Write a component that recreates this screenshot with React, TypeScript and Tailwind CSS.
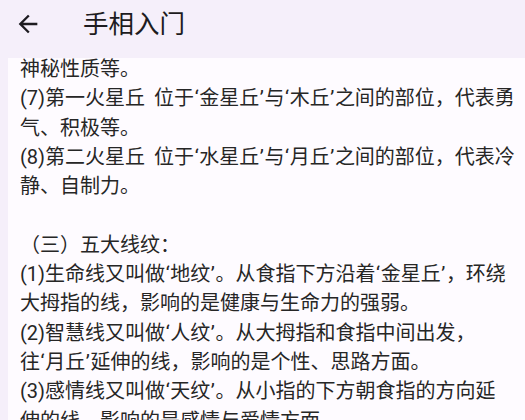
const LINES = [
  '神秘性质等。',
  '(7)第一火星丘 位于‘金星丘’与‘木丘’之间的部位，代表勇',
  '气、积极等。',
  '(8)第二火星丘 位于‘水星丘’与‘月丘’之间的部位，代表冷',
  '静、自制力。',
  '',
  '（三）五大线纹：',
  '(1)生命线又叫做‘地纹’。从食指下方沿着‘金星丘’，环绕',
  '大拇指的线，影响的是健康与生命力的强弱。',
  '(2)智慧线又叫做‘人纹’。从大拇指和食指中间出发，',
  '往‘月丘’延伸的线，影响的是个性、思路方面。',
  '(3)感情线又叫做‘天纹’。从小指的下方朝食指的方向延',
  '伸的线，影响的是感情与爱情方面。',
]

// quotes and spaces are a touch wider in the screenshot than in Roboto
function Line({ text }: { text: string }) {
  const parts = text.split(/([‘’ ])/)
  return (
    <div className="whitespace-nowrap h-[29.3px]">
      {parts.map((p, i) =>
        p === '‘' || p === '’' ? (
          <span key={i} className="px-[0.6px]">{p}</span>
        ) : p === ' ' ? (
          <span key={i} className="inline-block w-[9px]" />
        ) : (
          <span key={i}>{p}</span>
        ),
      )}
    </div>
  )
}

export default function App() {
  return (
    <div
      className="w-[525px] h-[420px] flex flex-col bg-[#f5effa] overflow-hidden"
      style={{ fontFamily: "Roboto, 'Noto Sans CJK SC', sans-serif" }}
    >
      {/* App bar */}
      <div className="h-[58px] shrink-0 flex items-center -mt-[5px]">
        <div className="w-[56px] flex items-center justify-center">
          <svg width="28" height="28" viewBox="0 0 24 24" className="text-[#1d1b20]">
            <path d="M20 11H7.83l5.59-5.59L12 4l-8 8 8 8 1.41-1.41L7.83 13H20v-2z" fill="currentColor" />
          </svg>
        </div>
        <div className="ml-[27px] text-[25.5px] text-[#1d1b20]">手相入门</div>
      </div>

      {/* Body */}
      <div className="flex-1 ml-[8px] mt-[5px] bg-[#fefbff] overflow-hidden">
        <div className="pl-[12px] -mt-[3px] text-[20px] leading-[29.3px] text-[#262626]">
          {LINES.map((l, i) => (
            <Line key={i} text={l} />
          ))}
        </div>
      </div>
    </div>
  )
}
